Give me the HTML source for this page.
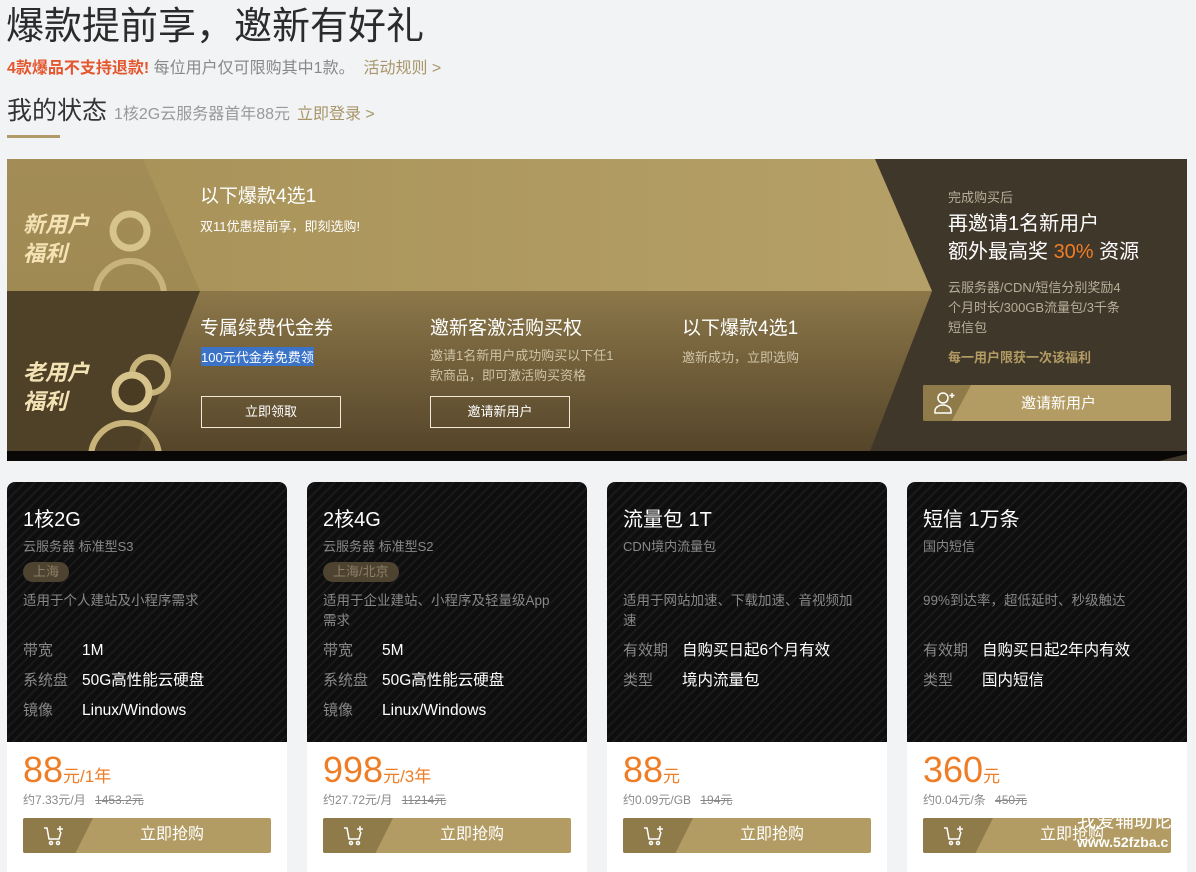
<!DOCTYPE html>
<html><head><meta charset="utf-8"><style>
*{margin:0;padding:0;box-sizing:border-box}
body{width:1196px;height:858px;overflow:hidden;background:#f2f3f5;font-family:"Liberation Sans","Noto Sans CJK SC",sans-serif;position:relative;color:#333}
.a{position:absolute;white-space:nowrap}
.card{position:absolute;top:482px;width:280px;height:390px;border-radius:8px 8px 0 0;overflow:hidden;background:#fff}
.card .dk{position:absolute;left:0;top:0;width:280px;height:260px;background:#0e0e0f repeating-linear-gradient(135deg,rgba(255,255,255,0) 0 5px,rgba(255,255,255,.05) 5px 7px)}
.card .t{position:absolute;left:16px;top:25px;font-size:20px;line-height:26px;color:#fff}
.card .s{position:absolute;left:16px;top:56px;font-size:13px;line-height:18px;color:#888}
.tag{position:absolute;left:16px;top:80px;height:20px;padding:0 10px;border-radius:10px;background:#4e4331;color:#8d7f66;font-size:13px;line-height:20px}
.card .d{position:absolute;left:16px;top:109px;width:238px;font-size:13.5px;color:#888;line-height:20px}
.card .k{position:absolute;left:16px;font-size:15px;line-height:20px;color:#888}
.card .v{position:absolute;left:75px;font-size:15.5px;line-height:20px;color:#fff}
.pr{position:absolute;left:16px;top:266px;color:#ef7d26;font-size:36px;line-height:44px;white-space:nowrap}
.pr small{font-size:17px}
.sub{position:absolute;left:16px;top:309px;font-size:12px;color:#888;white-space:nowrap}
.sub s{margin-left:6px}
.btn{position:absolute;left:16px;top:336px;width:248px;height:35px;border-radius:2px;background:#b39c63;overflow:hidden}
.btn .l{position:absolute;left:0;top:0;width:70px;height:35px;background:#8f7a49;clip-path:polygon(0 0,100% 0,75% 100%,0 100%)}
.btn .bt{position:absolute;left:0;width:100%;padding-left:50px;text-align:center;top:6px;color:#fff;font-size:16px;line-height:22px}
.ob{position:absolute;width:140px;height:32px;border:1px solid #f2ead8;color:#fff;font-size:13px;text-align:center;line-height:30px}
</style></head><body>
<div class="a" style="left:6px;top:-5px;font-size:38px;color:#2b2b2b">爆款提前享，邀新有好礼</div>
<div class="a" style="left:7px;top:54px;font-size:16px;color:#888"><b style="color:#e4572e">4款爆品不支持退款!</b> 每位用户仅可限购其中1款。 &nbsp;<span style="color:#a8966a">活动规则 &gt;</span></div>
<div class="a" style="left:7px;top:91px;font-size:25px;color:#333">我的状态 <span style="font-size:16px;color:#999">1核2G云服务器首年88元</span> <span style="font-size:16px;color:#a8966a">立即登录 &gt;</span></div>
<div class="a" style="left:7px;top:135px;width:53px;height:3px;background:#b09b68"></div>

<svg class="a" style="left:7px;top:159px" width="1180" height="302" viewBox="0 0 1180 302">
<defs>
<linearGradient id="g1" x1="0" x2="1"><stop offset="0" stop-color="#a79157"/><stop offset="1" stop-color="#b5a068"/></linearGradient>
<linearGradient id="g2" x1="0" y1="0" x2="0" y2="1"><stop offset="0" stop-color="#8c7749"/><stop offset="1" stop-color="#55452a"/></linearGradient>
<linearGradient id="g3" x1="0" y1="0" x2="0" y2="1"><stop offset="0" stop-color="#a38c55"/><stop offset="1" stop-color="#a08a54"/></linearGradient>
<clipPath id="c1"><rect width="300" height="132"/></clipPath>
<clipPath id="c2"><rect y="132" width="300" height="160"/></clipPath>
</defs>
<rect width="1180" height="302" fill="#40372b"/>
<polygon points="0,0 868,0 925,132 0,132" fill="url(#g1)"/>
<polygon points="0,0 136,0 193,132 0,132" fill="url(#g3)"/>
<polygon points="0,132 925,132 863,292 0,292" fill="url(#g2)"/>
<polygon points="0,132 193,132 130,292 0,292" fill="#4f4127"/>
<polygon points="0,292 1180,292 1180,295 1152,302 0,302" fill="#0a0806"/>
<g clip-path="url(#c1)">
<circle cx="123" cy="72" r="17" fill="none" stroke="#d7c48c" stroke-width="7"/>
<circle cx="123" cy="136" r="34" fill="none" stroke="#c8b47a" stroke-width="6"/>
</g>
<g clip-path="url(#c2)">
<circle cx="143" cy="216" r="18" fill="none" stroke="#c8b47a" stroke-width="6"/>
<circle cx="125" cy="233" r="17" fill="#4a3c22" stroke="#d7c48c" stroke-width="7"/>
<circle cx="118" cy="298" r="34" fill="none" stroke="#c8b47a" stroke-width="6"/>
</g>
</svg>
<div class="a" style="left:23px;top:210px;font-size:22px;font-style:italic;font-weight:bold;color:#f3e2b4;line-height:29px;white-space:normal">新用户<br>福利</div>
<div class="a" style="left:23px;top:358px;font-size:22px;font-style:italic;font-weight:bold;color:#f3e2b4;line-height:29px;white-space:normal">老用户<br>福利</div>
<div class="a" style="left:200px;top:181px;font-size:19px;color:#fff">以下爆款4选1</div>
<div class="a" style="left:200px;top:216px;font-size:13px;color:#fff">双11优惠提前享，即刻选购!</div>
<div class="a" style="left:200px;top:313px;font-size:19px;color:#fff">专属续费代金券</div>
<div class="a" style="left:201px;top:347px;font-size:13px;color:#fff;background:#3a73c8">100元代金券免费领</div>
<div class="ob" style="left:201px;top:396px">立即领取</div>
<div class="a" style="left:430px;top:313px;font-size:19px;color:#fff">邀新客激活购买权</div>
<div class="a" style="left:430px;top:346px;font-size:13px;color:#cfc3a6;line-height:20px">邀请1名新用户成功购买以下任1<br>款商品，即可激活购买资格</div>
<div class="ob" style="left:430px;top:396px">邀请新用户</div>
<div class="a" style="left:682px;top:313px;font-size:19px;color:#fff">以下爆款4选1</div>
<div class="a" style="left:682px;top:347px;font-size:13px;color:#cfc3a6">邀新成功，立即选购</div>
<div class="a" style="left:948px;top:187px;font-size:13px;color:#b9ae9a">完成购买后</div>
<div class="a" style="left:948px;top:210px;font-size:20px;color:#fff;line-height:28px">再邀请1名新用户<br>额外最高奖 <span style="color:#ef7d26">30%</span> 资源</div>
<div class="a" style="left:948px;top:278px;font-size:13px;color:#b9ae9a;line-height:20px">云服务器/CDN/短信分别奖励4<br>个月时长/300GB流量包/3千条<br>短信包</div>
<div class="a" style="left:948px;top:347px;font-size:13px;color:#b39c63;font-weight:bold">每一用户限获一次该福利</div>
<div class="a" style="left:923px;top:385px;width:248px;height:36px;background:#b39c63;border-radius:2px;overflow:hidden">
<div style="position:absolute;left:0;top:0;width:48px;height:36px;background:#8f7a49;clip-path:polygon(0 0,100% 0,60% 100%,0 100%)"></div>
<svg style="position:absolute;left:10px;top:6px" width="24" height="24" viewBox="0 0 24 24" fill="none" stroke="#fff" stroke-width="1.5"><circle cx="10" cy="7" r="5"/><path d="M2 22v-2a8 6 0 0 1 16 0v2z"/><path d="M19 2v5M16.5 4.5h5"/></svg>
<div style="position:absolute;left:98px;top:7px;color:#fff;font-size:15px">邀请新用户</div></div>

<div class="card" style="left:7px"><div class="dk"></div>
<div class="t">1核2G</div><div class="s">云服务器 标准型S3</div><div class="tag">上海</div>
<div class="d">适用于个人建站及小程序需求</div>
<div class="k" style="top:159px">带宽</div><div class="v" style="top:159px">1M</div>
<div class="k" style="top:189px">系统盘</div><div class="v" style="top:189px">50G高性能云硬盘</div>
<div class="k" style="top:219px">镜像</div><div class="v" style="top:219px">Linux/Windows</div>
<div class="pr">88<small>元/1年</small></div><div class="sub">约7.33元/月 <s>1453.2元</s></div>
<div class="btn"><div class="l"></div><svg style="position:absolute;left:20px;top:7px" width="22" height="22" viewBox="0 0 22 22" fill="none" stroke="#fff" stroke-width="1.5"><path d="M1 3h3l2 11h10l2-7"/><circle cx="8" cy="18" r="1.5"/><circle cx="15" cy="18" r="1.5"/><path d="M17 1v6M14 4h6"/></svg><div class="bt">立即抢购</div></div></div>

<div class="card" style="left:307px"><div class="dk"></div>
<div class="t">2核4G</div><div class="s">云服务器 标准型S2</div><div class="tag">上海/北京</div>
<div class="d">适用于企业建站、小程序及轻量级App需求</div>
<div class="k" style="top:159px">带宽</div><div class="v" style="top:159px">5M</div>
<div class="k" style="top:189px">系统盘</div><div class="v" style="top:189px">50G高性能云硬盘</div>
<div class="k" style="top:219px">镜像</div><div class="v" style="top:219px">Linux/Windows</div>
<div class="pr">998<small>元/3年</small></div><div class="sub">约27.72元/月 <s>11214元</s></div>
<div class="btn"><div class="l"></div><svg style="position:absolute;left:20px;top:7px" width="22" height="22" viewBox="0 0 22 22" fill="none" stroke="#fff" stroke-width="1.5"><path d="M1 3h3l2 11h10l2-7"/><circle cx="8" cy="18" r="1.5"/><circle cx="15" cy="18" r="1.5"/><path d="M17 1v6M14 4h6"/></svg><div class="bt">立即抢购</div></div></div>

<div class="card" style="left:607px"><div class="dk"></div>
<div class="t">流量包 1T</div><div class="s">CDN境内流量包</div>
<div class="d">适用于网站加速、下载加速、音视频加速</div>
<div class="k" style="top:159px">有效期</div><div class="v" style="top:159px">自购买日起6个月有效</div>
<div class="k" style="top:189px">类型</div><div class="v" style="top:189px">境内流量包</div>
<div class="pr">88<small>元</small></div><div class="sub">约0.09元/GB <s>194元</s></div>
<div class="btn"><div class="l"></div><svg style="position:absolute;left:20px;top:7px" width="22" height="22" viewBox="0 0 22 22" fill="none" stroke="#fff" stroke-width="1.5"><path d="M1 3h3l2 11h10l2-7"/><circle cx="8" cy="18" r="1.5"/><circle cx="15" cy="18" r="1.5"/><path d="M17 1v6M14 4h6"/></svg><div class="bt">立即抢购</div></div></div>

<div class="card" style="left:907px"><div class="dk"></div>
<div class="t">短信 1万条</div><div class="s">国内短信</div>
<div class="d">99%到达率，超低延时、秒级触达</div>
<div class="k" style="top:159px">有效期</div><div class="v" style="top:159px">自购买日起2年内有效</div>
<div class="k" style="top:189px">类型</div><div class="v" style="top:189px">国内短信</div>
<div class="pr">360<small>元</small></div><div class="sub">约0.04元/条 <s>450元</s></div>
<div class="btn"><div class="l"></div><svg style="position:absolute;left:20px;top:7px" width="22" height="22" viewBox="0 0 22 22" fill="none" stroke="#fff" stroke-width="1.5"><path d="M1 3h3l2 11h10l2-7"/><circle cx="8" cy="18" r="1.5"/><circle cx="15" cy="18" r="1.5"/><path d="M17 1v6M14 4h6"/></svg><div class="bt">立即抢购</div></div></div>
<div class="a" style="left:1077px;top:812px;font-size:19px;color:#fff;line-height:20px">我爱辅助论<br><span style="font-size:14px;font-weight:bold">www.52fzba.c</span></div>
</body></html>
